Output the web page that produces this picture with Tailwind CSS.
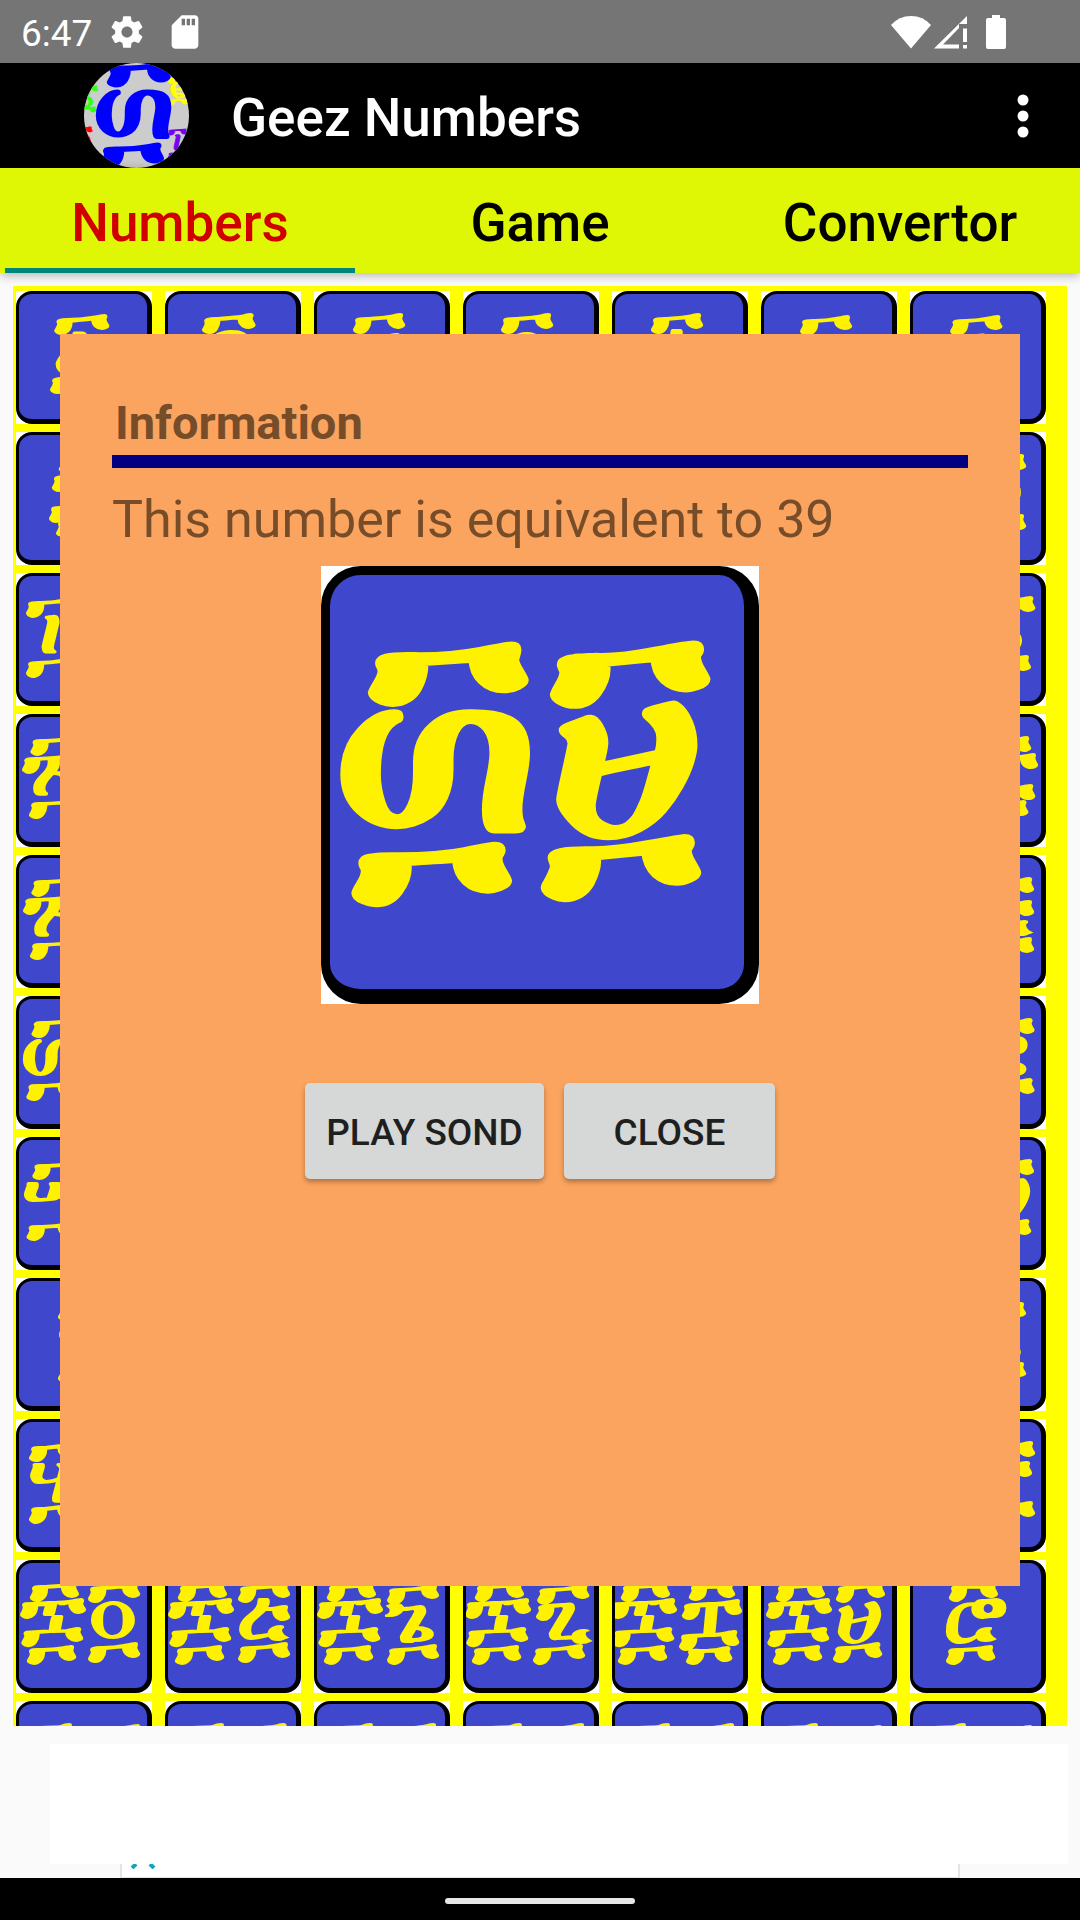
<!DOCTYPE html>
<html lang="en">
<head>
<meta charset="utf-8">
<meta name="viewport" content="width=device-width, initial-scale=1">
<title>Geez Numbers</title>
<script src="https://cdn.jsdelivr.net/npm/@tailwindcss/browser@4"></script>
</head>
<body class="flex h-screen flex-col overflow-hidden bg-[#fafafa] font-['Roboto',sans-serif]">

<!-- Status bar -->
<div class="flex h-[63px] shrink-0 items-center bg-[#757575] pl-[21px] pr-[73px] text-white">
  <span class="text-[37px] leading-[43px] pt-[3px]">6:47</span>
  <svg class="ml-4 size-[38px]" viewBox="0 0 24 24" fill="currentColor" aria-label="Settings"><path d="M19.43 12.98c.04-.32.07-.64.07-.98s-.03-.66-.07-.98l2.11-1.65c.19-.15.24-.42.12-.64l-2-3.46c-.12-.22-.39-.3-.61-.22l-2.49 1c-.52-.4-1.08-.73-1.69-.98l-.38-2.65C14.46 2.18 14.25 2 14 2h-4c-.25 0-.46.18-.49.42l-.38 2.65c-.61.25-1.17.59-1.69.98l-2.49-1c-.23-.09-.49 0-.61.22l-2 3.46c-.13.22-.07.49.12.64l2.11 1.65c-.04.32-.07.65-.07.98s.03.66.07.98l-2.11 1.65c-.19.15-.24.42-.12.64l2 3.46c.12.22.39.3.61.22l2.49-1c.52.4 1.08.73 1.69.98l.38 2.65c.03.24.24.42.49.42h4c.25 0 .46-.18.49-.42l.38-2.65c.61-.25 1.17-.59 1.69-.98l2.49 1c.23.09.49 0 .61-.22l2-3.46c.12-.22.07-.49-.12-.64l-2.11-1.65zM12 15.5c-1.93 0-3.5-1.57-3.5-3.5s1.57-3.5 3.5-3.5 3.5 1.57 3.5 3.5-1.57 3.5-3.5 3.5z"/></svg>
  <svg class="ml-[19px] size-[40px]" viewBox="0 0 24 24" fill="currentColor" aria-label="Memory card"><path d="M18 2h-8L4.02 8 4 20c0 1.1.9 2 2 2h12c1.1 0 2-.9 2-2V4c0-1.1-.9-2-2-2zm-6 6h-2V4h2v4zm3 0h-2V4h2v4zm3 0h-2V4h2v4z"/></svg>
  <span class="flex-1"></span>
  <svg class="h-[34px] w-[40px]" viewBox="0 0 40 34" fill="currentColor" aria-label="Wi-Fi"><path d="M0 10Q8 1 20 1T40 10L20 33.5Z"/></svg>
  <svg class="ml-[3px] h-[34px] w-[34px]" viewBox="0 0 34 34" fill="currentColor" aria-label="Mobile signal"><path d="M33 1V9H25V13L9 29.5H25V33.5H0ZM29 13.5H33V27H29ZM29 30H33V33.5H29Z"/></svg>
  <svg class="ml-[17px] h-[34px] w-[22px]" viewBox="0 0 22 34" fill="currentColor" aria-label="Battery"><path d="M7 0H15V3H19Q21 3 21 5V32Q21 34 19 34H3Q1 34 1 32V5Q1 3 3 3H7Z"/></svg>
</div>

<!-- App bar -->
<header class="flex h-[105px] shrink-0 items-center bg-black pl-[84px] pr-[30px] text-white">
  <div class="relative size-[105px] overflow-hidden rounded-full bg-[#cccccc] font-['DejaVu_Sans',sans-serif]" aria-hidden="true">
    <span class="absolute -left-[11px] top-[58px] text-[36px] leading-none text-[#ff0000] [-webkit-text-stroke:1px_#ff0000]">፬</span>
    <span class="absolute -left-[8px] top-[16px] text-[36px] leading-none text-[#33ff11] [-webkit-text-stroke:1px_#33ff11]">፩</span>
    <span class="absolute left-[84px] top-[8px] text-[36px] leading-none text-[#ffff00] [-webkit-text-stroke:1px_#ffff00]">፪</span>
    <span class="absolute left-[84px] top-[60px] text-[36px] leading-none text-[#7a00f0] [-webkit-text-stroke:1px_#7a00f0]">፲</span>
    <span class="absolute left-[7px] -top-[22px] text-[126px] leading-none text-[#0000ff] [-webkit-text-stroke:3px_#0000ff]">፴</span>
  </div>
  <h1 class="ml-[42px] pt-[6px] text-[53px] font-medium leading-[61px]">Geez Numbers</h1>
  <button class="ml-auto flex h-[64px] w-[54px] items-center justify-center" aria-label="More options">
    <svg class="h-[44px] w-[12px]" viewBox="0 0 12 44" fill="currentColor"><circle cx="6" cy="6" r="5.5"/><circle cx="6" cy="22" r="5.5"/><circle cx="6" cy="38" r="5.5"/></svg>
  </button>
</header>

<!-- Tabs -->
<nav class="relative grid h-[105px] shrink-0 grid-cols-3 bg-[#dff705] text-[53px] font-medium leading-[61px] text-black shadow-[0_2px_10px_rgba(0,0,0,0.3)]">
  <a href="#numbers" aria-current="page" class="mx-[5px] flex items-center justify-center border-b-[5px] border-[#00857a] pt-[11px] text-[#d00000]">Numbers</a>
  <a href="#game" class="flex items-center justify-center pt-[6px]">Game</a>
  <a href="#convertor" class="flex items-center justify-center pt-[6px]">Convertor</a>
</nav>

<main class="relative mx-[13px] mt-[13px] flex min-h-0 flex-1 flex-col">
  <div id="tiles" class="grid min-h-0 flex-1 auto-rows-[133px] grid-cols-7 gap-x-[13px] gap-y-2 overflow-hidden bg-[#ffff00] pl-[3px] pr-[21px] pt-[5px] font-['DejaVu_Sans',sans-serif]"></div>

  <!-- Information dialog -->
  <section role="dialog" aria-labelledby="dialog-title" class="absolute inset-x-[47px] bottom-[140px] top-[48px] flex flex-col items-center bg-[#fba45f] px-[52px] pt-[61px] text-[#774d29]">
    <h2 id="dialog-title" class="w-full pl-[3px] text-[47px] font-bold leading-[56px]">Information</h2>
    <div class="mt-1 h-[13px] w-full shrink-0 bg-[#000080]"></div>
    <p class="mt-[21px] w-full text-[52px] leading-[61px]">This number is equivalent to 39</p>
    <div class="mt-4 size-[438px] shrink-0 bg-white font-['DejaVu_Sans',sans-serif]">
      <div class="flex size-full items-center justify-center overflow-hidden rounded-[40px] border-[9px] border-b-[15px] border-r-[15px] border-black bg-[#3f47cc] pb-[74px] pr-[36px]">
        <span class="text-[316px] leading-none text-[#fff200] [-webkit-text-stroke:8px_#fff200]">፴፱</span>
      </div>
    </div>
    <div class="mt-[79px] flex gap-5 text-[37px] font-medium text-[#1e1f1f]">
      <button class="h-[96px] w-[239px] rounded-[5px] bg-[#d6d7d7] pt-1 shadow-[0_3px_5px_rgba(0,0,0,0.3)]">PLAY SOND</button>
      <button class="h-[96px] w-[211px] rounded-[5px] bg-[#d6d7d7] pt-1 shadow-[0_3px_5px_rgba(0,0,0,0.3)]">CLOSE</button>
    </div>
  </section>
</main>

<!-- Advertisement area -->
<aside class="h-[152px] shrink-0 pt-[18px]">
  <div class="ml-[50px] mr-3 h-[120px] bg-white"></div>
  <div class="mx-[120px] h-[14px] border-x-2 border-b border-[#e4e4e4] bg-white pl-2">
    <svg class="h-[5px] w-[26px]" viewBox="0 0 26 5" aria-hidden="true"><path d="M2 4 6 0M24 4 20 0" stroke="#12a5b8" stroke-width="4"/></svg>
  </div>
</aside>

<!-- System navigation -->
<footer class="flex h-[42px] shrink-0 items-center justify-center bg-black pt-[3px]">
  <div class="h-[6px] w-[190px] rounded-full bg-[#e6e6e6]"></div>
</footer>

<script>
  const units = ['', '፩', '፪', '፫', '፬', '፭', '፮', '፯', '፰', '፱'];
  const tens = ['', '፲', '፳', '፴', '፵', '፶', '፷', '፸', '፹', '፺'];
  const grid = document.getElementById('tiles');
  for (let n = 1; n <= 77; n++) {
    const tile = document.createElement('button');
    tile.className = 'overflow-hidden bg-white';
    tile.setAttribute('aria-label', String(n));
    const face = document.createElement('span');
    face.className = 'flex size-full items-center justify-center overflow-hidden rounded-[16px] border-[3px] border-r-[5px] border-b-[5px] border-black bg-[#3f47cc] pb-[23px] pr-[6px] text-[98px] leading-none text-[#fff200] [-webkit-text-stroke:2px_#fff200]';
    face.textContent = tens[Math.floor(n / 10)] + units[n % 10];
    tile.append(face);
    grid.append(tile);
  }
</script>
</body>
</html>
